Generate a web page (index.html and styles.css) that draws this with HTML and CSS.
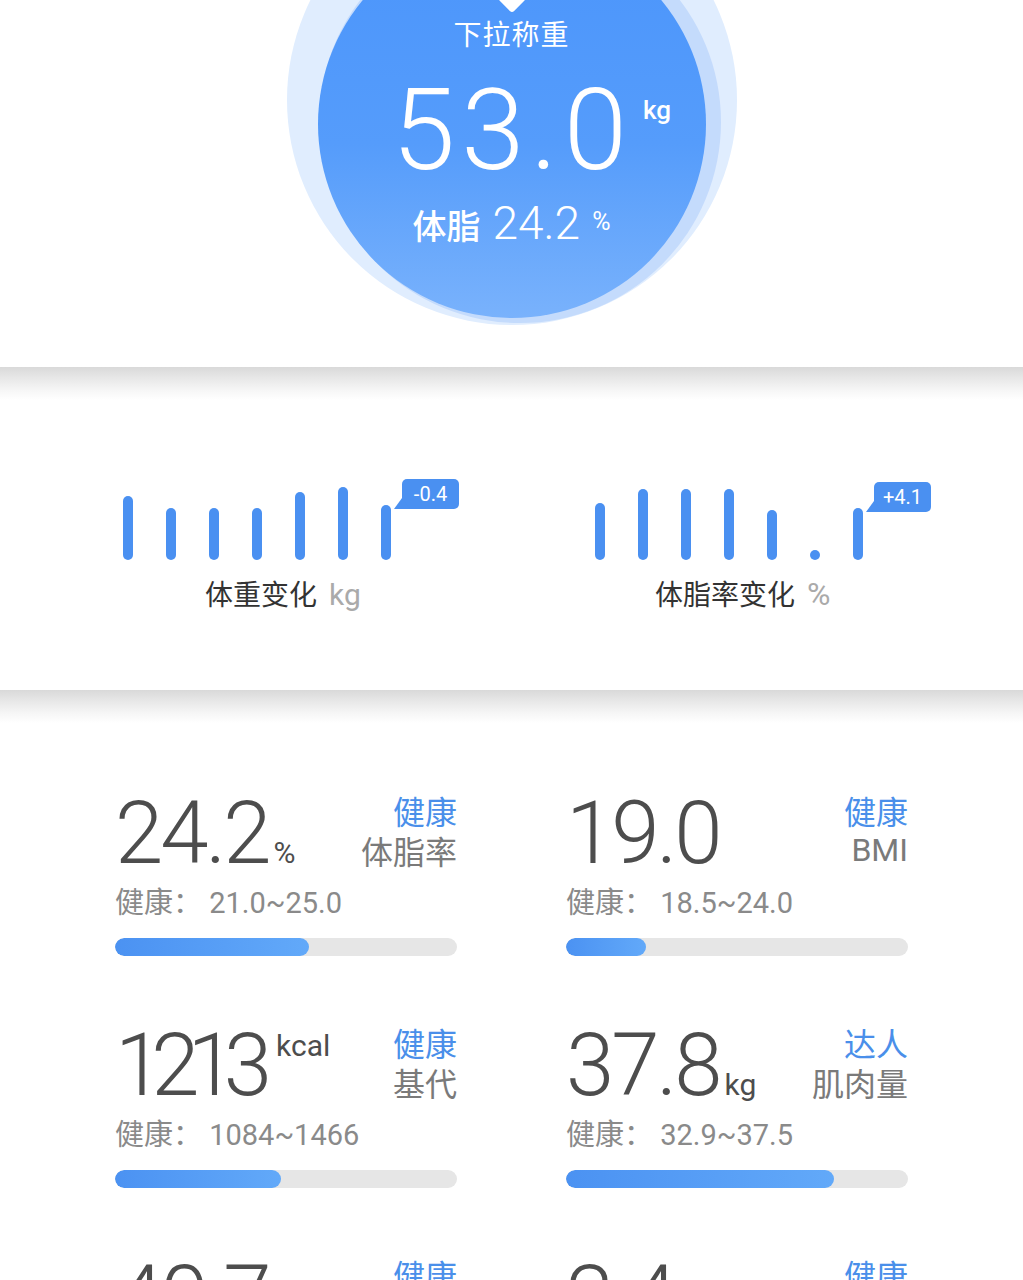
FILE: index.html
```html
<!DOCTYPE html>
<html lang="zh-CN">
<head>
<meta charset="utf-8">
<title>称重</title>
<link rel="stylesheet" href="styles.css">
</head>
<body>
<div class="page">
  <header class="hero">
    <div class="halo halo-outer"></div>
    <div class="halo halo-mid"></div>
    <div class="dial">
      <div class="notch"></div>
      <div class="dial-title">下拉称重</div>
      <div class="weight"><span class="weight-num">53.0</span><span class="weight-unit">kg</span></div>
      <div class="fat"><span class="fat-label">体脂</span><span class="fat-num">24.2</span><span class="fat-unit">%</span></div>
    </div>
  </header>

  <div class="divider"></div>

  <section class="trends">
    <div class="chart chart-weight">
      <div class="bars">
        <span class="bar" style="height:64px"></span>
        <span class="bar" style="height:52px"></span>
        <span class="bar" style="height:52px"></span>
        <span class="bar" style="height:52px"></span>
        <span class="bar" style="height:68px"></span>
        <span class="bar" style="height:73px"></span>
        <span class="bar bar-last" style="height:55px"><span class="bubble">-0.4</span></span>
      </div>
      <div class="chart-label">体重变化<span class="chart-unit">kg</span></div>
    </div>
    <div class="chart chart-fat">
      <div class="bars">
        <span class="bar" style="height:57px"></span>
        <span class="bar" style="height:71px"></span>
        <span class="bar" style="height:71px"></span>
        <span class="bar" style="height:71px"></span>
        <span class="bar" style="height:50px"></span>
        <span class="bar" style="height:10px"></span>
        <span class="bar bar-last" style="height:52px"><span class="bubble">+4.1</span></span>
      </div>
      <div class="chart-label">体脂率变化<span class="chart-unit chart-unit-pct">%</span></div>
    </div>
  </section>

  <div class="divider"></div>

  <section class="metrics">
    <div class="metric">
      <div class="metric-top">
        <div class="metric-value"><span class="num">24.2</span><span class="unit">%</span></div>
        <div class="metric-tag"><div class="status">健康</div><div class="name">体脂率</div></div>
      </div>
      <div class="range">健康：&nbsp;21.0~25.0</div>
      <div class="track"><div class="fill" style="width:56.7%"></div></div>
    </div>
    <div class="metric">
      <div class="metric-top">
        <div class="metric-value"><span class="num">19.0</span></div>
        <div class="metric-tag"><div class="status">健康</div><div class="name name-latin">BMI</div></div>
      </div>
      <div class="range">健康：&nbsp;18.5~24.0</div>
      <div class="track"><div class="fill" style="width:23.4%"></div></div>
    </div>
    <div class="metric">
      <div class="metric-top">
        <div class="metric-value"><span class="num num-tight">1213</span><span class="unit unit-sup">kcal</span></div>
        <div class="metric-tag"><div class="status">健康</div><div class="name">基代</div></div>
      </div>
      <div class="range">健康：&nbsp;1084~1466</div>
      <div class="track"><div class="fill" style="width:48.5%"></div></div>
    </div>
    <div class="metric">
      <div class="metric-top">
        <div class="metric-value"><span class="num">37.8</span><span class="unit">kg</span></div>
        <div class="metric-tag"><div class="status">达人</div><div class="name">肌肉量</div></div>
      </div>
      <div class="range">健康：&nbsp;32.9~37.5</div>
      <div class="track"><div class="fill" style="width:78.4%"></div></div>
    </div>
    <div class="metric">
      <div class="metric-top">
        <div class="metric-value"><span class="num">40.7</span></div>
        <div class="metric-tag"><div class="status">健康</div><div class="name">水分</div></div>
      </div>
      <div class="range">健康：&nbsp;36.0~44.0</div>
      <div class="track"><div class="fill" style="width:50%"></div></div>
    </div>
    <div class="metric">
      <div class="metric-top">
        <div class="metric-value"><span class="num">2.4</span></div>
        <div class="metric-tag"><div class="status">健康</div><div class="name">骨量</div></div>
      </div>
      <div class="range">健康：&nbsp;2.0~2.8</div>
      <div class="track"><div class="fill" style="width:50%"></div></div>
    </div>
  </section>
</div>
</body>
</html>
```

FILE: styles.css
```css
* { box-sizing: border-box; }
html, body { margin: 0; padding: 0; background: #fff; }
body {
  width: 1023px;
  height: 1280px;
  overflow: hidden;
  font-family: Roboto, "Noto Sans CJK SC", sans-serif;
  color: #333;
}
.page { width: 1023px; }

/* ---------- hero ---------- */
.hero {
  position: relative;
  height: 367px;
  overflow: hidden;
  background: #fff;
}
.halo {
  position: absolute;
  border-radius: 50%;
}
.halo-outer {
  left: 287px;
  top: -125px;
  width: 450px;
  height: 450px;
  background: #e0edfe;
}
.halo-mid {
  left: 319px;
  top: -79px;
  width: 402px;
  height: 402px;
  background: #c4dbfc;
}
.dial {
  position: relative;
  width: 388px;
  height: 388px;
  margin: -70px auto 0;
  border-radius: 50%;
  background: linear-gradient(180deg, #4b95fb 0%, #559cfb 55%, #79b2fc 100%);
  display: flex;
  flex-direction: column;
  align-items: center;
  padding-top: 86px;
  color: #fff;
}
.notch {
  position: absolute;
  left: 184px;
  top: 59px;
  width: 20px;
  height: 20px;
  background: #fff;
  border-radius: 3px;
  transform: rotate(45deg);
}
.dial-title {
  font-family: "Noto Sans CJK SC", sans-serif;
  font-size: 28px;
  line-height: 34px;
  letter-spacing: 1px;
}
.weight {
  display: flex;
  align-items: flex-start;
  margin-top: 23px;
  padding-left: 40px;
}
.weight-num {
  font-family: Roboto, sans-serif;
  font-weight: 300;
  font-size: 114px;
  line-height: 1;
  letter-spacing: 6px;
}
.weight-unit {
  font-family: Roboto, sans-serif;
  font-weight: 500;
  font-size: 26px;
  line-height: 1;
  margin-top: 24px;
  margin-left: 10px;
}
.fat {
  display: block;
  text-align: center;
  margin-top: 7px;
  line-height: 56px;
  white-space: nowrap;
}
.fat-label {
  font-family: "Noto Sans CJK SC", sans-serif;
  font-weight: 500;
  font-size: 34px;
}
.fat-num {
  font-family: Roboto, sans-serif;
  font-weight: 300;
  font-size: 46px;
  margin-left: 12px;
}
.fat-unit {
  font-family: Roboto, sans-serif;
  font-size: 25px;
  margin-left: 12px;
  vertical-align: 9px;
}

/* ---------- divider ---------- */
.divider {
  height: 33px;
  background: linear-gradient(180deg, #d9d9d9 0%, #e6e6e6 30%, #f6f6f6 70%, #fff 100%);
}

/* ---------- trends ---------- */
.trends {
  display: flex;
  height: 290px;
  padding: 85px 0 0 123px;
}
.chart { width: 472px; flex-shrink: 0; }
.bars {
  display: flex;
  align-items: flex-end;
  gap: 33px;
  height: 75px;
}
.bar {
  position: relative;
  display: block;
  width: 10px;
  border-radius: 5px;
  background: #4a90f1;
}
.bubble {
  position: absolute;
  left: 21px;
  top: -26px;
  width: 57px;
  height: 30px;
  border-radius: 5px;
  background: #4a90f1;
  color: #fff;
  font-family: Roboto, sans-serif;
  font-size: 20px;
  line-height: 30px;
  text-align: center;
}
.bubble::before {
  content: "";
  position: absolute;
  left: -8px;
  bottom: 0;
  width: 16px;
  height: 11px;
  background: #4a90f1;
  clip-path: polygon(0 100%, 50% 0, 100% 100%);
}
.chart-label {
  margin-top: 16px;
  font-family: "Noto Sans CJK SC", sans-serif;
  font-size: 28px;
  line-height: 34px;
  color: #333;
  white-space: nowrap;
}
.chart-weight .chart-label { margin-left: 82px; }
.chart-fat .chart-label { margin-left: 60px; }
.chart-unit {
  font-family: Roboto, sans-serif;
  font-size: 30px;
  color: #aaa;
  margin-left: 12px;
}
.chart-unit-pct { font-size: 32px; }

/* ---------- metrics ---------- */
.metrics {
  display: grid;
  grid-template-columns: 342px 342px;
  column-gap: 109px;
  row-gap: 66px;
  padding: 67px 0 0 115px;
}
.metric-top {
  display: flex;
  justify-content: space-between;
  align-items: flex-start;
}
.metric-value {
  display: flex;
  align-items: baseline;
  color: #4d4d4d;
}
.num {
  font-family: Roboto, sans-serif;
  font-weight: 300;
  font-size: 87px;
  line-height: 1;
  letter-spacing: -3px;
}
.metric-value .num-tight { letter-spacing: -12px; }
.unit {
  font-family: Roboto, sans-serif;
  font-size: 30px;
  line-height: 1;
  margin-left: 5px;
}
.unit-sup {
  align-self: flex-start;
  margin-top: 9px;
  margin-left: 16px;
}
.metric-tag {
  text-align: right;
  font-family: "Noto Sans CJK SC", sans-serif;
  font-size: 32px;
  line-height: 40px;
}
.status { color: #4a8fea; }
.name { color: #7a7a7a; }
.name-latin {
  font-family: Roboto, sans-serif;
  font-size: 32px;
}
.range {
  margin-top: 6px;
  font-family: Roboto, "Noto Sans CJK SC", sans-serif;
  font-size: 29px;
  line-height: 40px;
  color: #8a8a8a;
}
.track {
  margin-top: 15px;
  height: 18px;
  border-radius: 9px;
  background: #e6e6e6;
  overflow: hidden;
}
.fill {
  height: 100%;
  border-radius: 9px;
  background: linear-gradient(90deg, #4b92f2 0%, #62a9f9 100%);
}
```
